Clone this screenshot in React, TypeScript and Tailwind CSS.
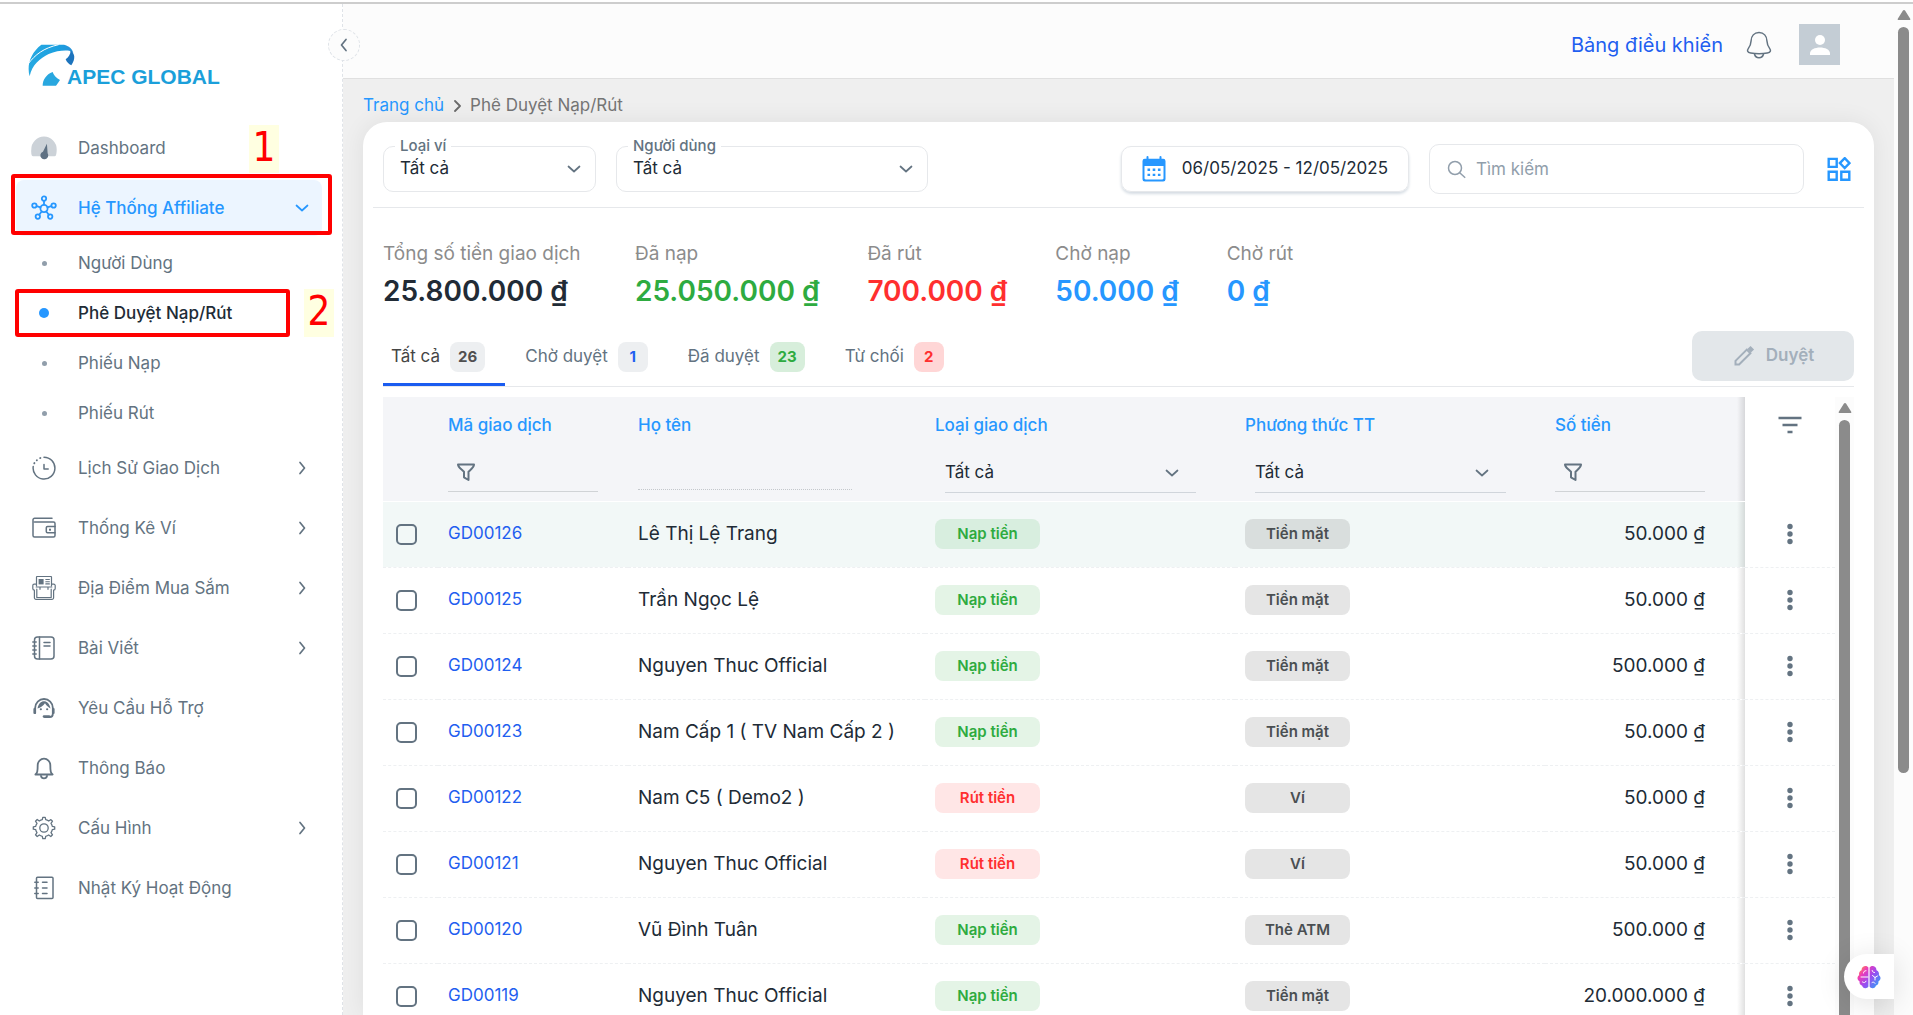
import type { ReactNode } from "react";

type IconProps = { className?: string };

function Svg({ className = "size-6", children, box = "0 0 24 24" }: IconProps & { children: ReactNode; box?: string }) {
  return (
    <svg
      viewBox={box}
      className={className}
      fill="none"
      stroke="currentColor"
      strokeWidth="1.5"
      strokeLinecap="round"
      strokeLinejoin="round"
      aria-hidden="true"
    >
      {children}
    </svg>
  );
}

const Gauge = () => (
  <Svg className="size-[26px]" box="0 0 25 25">
    <path d="M2 20.500a1.400 1.400 0 0 1-1.200-.8A12.500 12.500 0 0 1 .3 14 12.200 12.200 0 0 1 12.500 1.500 12.200 12.200 0 0 1 24.700 14c0 2.400-.2 4.300-.8 5.700a1.400 1.400 0 0 1-1.200.8z" fill="#ccd2d8" stroke="none" />
    <path d="M15.300 8.500 16 17.500a3.800 3.800 0 1 1-6.900 1.200c.3-1.200 1.200-2.300 2.400-2.700z" fill="#5f7183" stroke="none" />
  </Svg>
);

const Network = () => (
  <Svg className="size-[26px]" box="0 0 26 26">
    <circle cx="13" cy="13.500" r="3.600" strokeWidth="1.800" />
    <circle cx="13" cy="3.600" r="2.200" strokeWidth="1.800" />
    <circle cx="3.400" cy="10.500" r="2.200" strokeWidth="1.800" />
    <circle cx="22.600" cy="10.500" r="2.200" strokeWidth="1.800" />
    <circle cx="6.800" cy="21.600" r="2.200" strokeWidth="1.800" />
    <circle cx="19.200" cy="21.600" r="2.200" strokeWidth="1.800" />
    <path d="M13 6v3.600M5.700 11.200l3.800 1.200M20.300 11.200l-3.800 1.200M8.200 19.700l2.500-3.200M17.800 19.700l-2.500-3.200" strokeWidth="1.800" />
  </Svg>
);

const History = () => (
  <Svg>
    <path d="M12 1.200a10.900 10.900 0 1 1-10.800 9.400" />
    <path d="M2.300 7.300l.1-.2M4.800 4.300l.1-.1M8.200 2.100l.2-.1" strokeWidth="1.900" />
    <path d="M12 8.500V13h4.200" />
  </Svg>
);

const Wallet = () => (
  <Svg>
    <path d="M20 2.200H2.600A1.600 1.600 0 0 0 1 3.800v15.700A1.500 1.500 0 0 0 2.500 21H21.500a1.500 1.500 0 0 0 1.500-1.500V7.600a1.500 1.500 0 0 0-1.500-1.500H2.500" />
    <path d="M23 10.500h-7.500a1.200 1.200 0 0 0-1.200 1.200v3.900a1.200 1.200 0 0 0 1.200 1.200H23" />
    <rect x="17" y="12.700" width="2" height="2" fill="currentColor" stroke="none" />
  </Svg>
);

const Store = () => (
  <Svg>
    <path d="M4.500 10V1.200a.7.7 0 0 1 .7-.7h13.600a.7.7 0 0 1 .7.700V10" strokeWidth="1.200" />
    <rect x="6.600" y="3" width="5" height="5.400" fill="currentColor" stroke="none" />
    <path d="M13.800 3.500h3.600M13.800 5.700h3.600M13.800 7.900h3.600" strokeWidth="1.100" />
    <path d="M4 8.200H2.200A1.400 1.400 0 0 0 .8 9.600v3a1.600 1.600 0 0 0 1.600 1.600v7.500A1.600 1.600 0 0 0 4 23.300h16a1.600 1.600 0 0 0 1.600-1.600v-7.500a1.600 1.600 0 0 0 1.600-1.600v-3a1.400 1.400 0 0 0-1.400-1.400H20M4.200 11h15.600M4.800 21.500v-8.300M19.200 21.500v-8.300M8 11v2.300M16 11v2.300M5 21.500h14" strokeWidth="1.200" />
  </Svg>
);

const Notebook = () => (
  <Svg>
    <rect x="2.500" y="1" width="19.500" height="22" rx="3" />
    <path d="M7.500 1v22M12 6.500h6M12 10h6M.8 6h3.400M.8 10h3.400M.8 14h3.400M.8 18h3.400" />
  </Svg>
);

const Support = () => (
  <Svg>
    <path d="M3.200 17v-5.200a8.800 8.800 0 0 1 17.600 0V18c0 1.800-1.200 3-3 3h-5" strokeWidth="1.800" />
    <path d="M2.500 13v4M21.500 13v4" strokeWidth="2.200" />
    <path d="M5.500 12.500C6.500 7.500 9 5.200 12 5.200s5.500 2.300 6.500 7.300c-2-1.200-4.200-3-5.500-5.300-1.600 2.600-4.500 4.500-7.500 5.300z" fill="currentColor" stroke="none" />
    <path d="M8.800 13.300h.1M15.100 13.300h.1" strokeWidth="2.100" />
    <path d="M12 20.500h5" strokeWidth="2.600" />
  </Svg>
);

const BellSmall = () => (
  <Svg>
    <path d="M3.400 18.500c1.800-1.500 2.300-2.700 2.300-9.500a6.300 6.300 0 0 1 12.600 0c0 6.800.5 8 2.300 9.500z" strokeWidth="1.800" />
    <path d="M9 20c.3 1.500 1.500 2.300 3 2.300s2.700-.8 3-2.300" strokeWidth="1.800" />
  </Svg>
);

const Gear = () => (
  <Svg>
    <circle cx="12" cy="12" r="4.200" strokeWidth="1.300" />
    <path
      strokeWidth="1.300"
      d="M10.300 3.700 10.800 1.300h2.400l.5 2.400a8.500 8.500 0 0 1 3 1.300l2.200-1.400 1.600 1.600L19 7.300a8.500 8.500 0 0 1 1.300 3l2.400.5v2.400l-2.400.5a8.500 8.500 0 0 1-1.300 3l1.500 2.100-1.700 1.700-2.100-1.500a8.500 8.500 0 0 1-3 1.300l-.5 2.400h-2.400l-.5-2.400a8.500 8.500 0 0 1-3-1.300l-2.100 1.500-1.700-1.700L5 16.700a8.500 8.500 0 0 1-1.300-3l-2.400-.5v-2.400l2.400-.5a8.500 8.500 0 0 1 1.300-3L3.500 5.200l1.700-1.700L7.300 5a8.500 8.500 0 0 1 3-1.300z"
    />
  </Svg>
);

const Log = () => (
  <Svg>
    <rect x="4.500" y="1.200" width="16.500" height="21.400" rx="1" />
    <path d="M2.800 6.200h3.400M2.800 12h3.400M2.800 17.600h3.400M10.500 6.200H15M10.500 12H15M10.500 17.600H15" />
  </Svg>
);

const ChevronDown = ({ className = "size-4" }: IconProps) => (
  <Svg className={className} box="0 0 16 16">
    <path d="M2.500 5.500 8 10.500l5.500-5" strokeWidth="1.700" />
  </Svg>
);

const ChevronRight = () => (
  <Svg className="size-4" box="0 0 16 16">
    <path d="M6 2.500 10.500 8 6 13.500" strokeWidth="1.700" />
  </Svg>
);

const Funnel = () => (
  <Svg className="size-5" box="0 0 20 20">
    <path d="M2 2.500h16c0 2.500-1.500 3.500-5.500 7.200v8.300l-4.500-2.700V9.700C4 6 2 5 2 2.500z" strokeWidth="2" />
  </Svg>
);

const BellLarge = () => (
  <Svg className="size-7" box="0 0 28 28">
    <path d="M14 1.500c5 0 7.700 3.800 7.900 8.300.2 3.500.8 5.200 2.700 7.600 1.600 2 1.200 4.200-2.300 4.700-5.500.8-11 .8-16.600 0-3.500-.5-3.900-2.700-2.300-4.700 1.900-2.400 2.500-4.100 2.700-7.600C6.300 5.300 9 1.500 14 1.500z" />
    <path d="M9.500 23c.5 2.300 2.200 3.700 4.500 3.700s4-1.400 4.500-3.700" />
  </Svg>
);

const Calendar = () => (
  <Svg className="h-[26px] w-6" box="0 0 24 26">
    <path fill="#2697ff" stroke="none" d="M5.500 0a1 1 0 0 1 1 1v1.800h11V1a1 1 0 0 1 2 0v1.800h1.700A2.300 2.300 0 0 1 23.500 5v18.200a2.300 2.300 0 0 1-2.300 2.300H2.800A2.300 2.300 0 0 1 .5 23.200V5a2.300 2.300 0 0 1 2.300-2.200h1.700V1a1 1 0 0 1 1-1zM2.500 10v12.300c0 .7.500 1.200 1.200 1.200h16.600c.7 0 1.200-.5 1.200-1.200V10z" />
    <path fill="#2697ff" stroke="none" d="M5.500 12.500h2.600v2.400H5.500zM10.700 12.500h2.600v2.400h-2.600zM15.900 12.500h2.600v2.400h-2.600zM5.500 17.700h2.600v2.400H5.500zM10.700 17.700h2.600v2.400h-2.600zM15.900 17.700h2.600v2.400h-2.600z" />
  </Svg>
);

const Widgets = () => (
  <Svg className="size-6">
    <path strokeWidth="2.400" strokeLinejoin="miter" strokeLinecap="butt" d="M1.700 1.900h8v8h-8zM1.700 14.700h8v8h-8zM14.300 14.700h8v8h-8zM17.700 1.200l4.800 4.900-4.800 4.900-4.800-4.900z" />
  </Svg>
);

const Brain = () => (
  <Svg className="h-6 w-6">
    <defs>
      <linearGradient id="brain" x1="0" y1="0.100" x2="1" y2="0.900">
        <stop offset="0" stopColor="#ffa030" />
        <stop offset="0.250" stopColor="#ef3bb8" />
        <stop offset="0.550" stopColor="#9a4cf0" />
        <stop offset="1" stopColor="#28a8f8" />
      </linearGradient>
    </defs>
    <path
      fill="url(#brain)"
      stroke="none"
      d="M11.400 2.500v19c-.8 1.500-2.500 2-4 1.500-1.400-.4-2-1.400-2.200-2.300-1.900-.5-3-2.200-2.600-4.200C.8 15.500.2 13.800.6 12.300c.2-1 .9-1.700 1.600-2.100-.7-2.200.3-4.300 2.300-5C4.600 2.800 6 1.200 8 1c1.600-.1 2.900.5 3.400 1.500zM12.600 2.500v19c.8 1.500 2.500 2 4 1.500 1.400-.4 2-1.400 2.200-2.300 1.900-.5 3-2.200 2.600-4.200 1.800-1 2.400-2.700 2-4.200-.2-1-.9-1.700-1.600-2.100.7-2.200-.3-4.300-2.300-5C19.400 2.800 18 1.200 16 1c-1.600-.1-2.900.5-3.400 1.500z"
    />
    <path stroke="#ffffff" strokeWidth="1" d="M4 12h7M6.500 8c0-1.500 1-2.300 2.500-2.300M5.500 17c1.500 1 3 .8 3.500-.8M15.200 5.500c.3 1.500 1 2 2.300 2M15.500 10.500l2.500 2 2.500-1.500M18 12.500v2.500M15 17.500c1.200-.8 2.400-.3 3 .8" />
  </Svg>
);

function Logo() {
  return (
    <a href="#" aria-label="APEC GLOBAL" className="flex items-end">
      <svg viewBox="0 0 144 126" className="h-[42px] w-12" aria-hidden="true">
        <defs>
          <linearGradient id="band" x1="0" y1="0" x2="1" y2="0">
            <stop offset="0" stopColor="#27a9e1" />
            <stop offset="0.700" stopColor="#1b9fe0" />
            <stop offset="1" stopColor="#2a90d8" />
          </linearGradient>
        </defs>
        <path fill="url(#band)" d="M5 97C-4 66 6 28 40 2h68c14 4 26 12 28 26l-12-8c-16-2-40 0-62 10C36 44 12 62 5 97z" />
        <path fill="none" stroke="#ffffff" strokeWidth="3" d="M0 60C22 32 46 12 92 2" />
        <path fill="#1d74bd" d="M128 20c12 8 16 22 2 44-8-4-14-10-17-18 8-6 14-14 15-26z" />
        <path fill="#29a7df" d="M44 125c0-16 10-34 30-41 2 8 10 18 22 24-4 6-8 12-12 17z" />
      </svg>
      <span className="-ml-[9px] font-['Liberation_Sans',sans-serif] text-[21px] leading-[18px] font-bold text-[#1b9fda]">APEC GLOBAL</span>
    </a>
  );
}

function Marker({ n, className }: { n: string; className: string }) {
  return (
    <span
      className={`absolute flex h-12 w-[30px] items-center justify-center bg-[#ffffe1] pb-1 font-['DejaVu_Sans_Condensed','DejaVu_Sans',sans-serif] text-[40px] leading-none text-[#ff0000] ${className}`}
    >
      {n}
    </span>
  );
}

type NavProps = { icon: ReactNode; label: string; arrow?: boolean; children?: ReactNode };

function NavItem({ icon, label, arrow, children }: NavProps) {
  return (
    <li className="relative">
      <a href="#" className="flex h-14 items-center pr-3 pl-[15px] text-[#637381]">
        <span className="flex w-[26px] justify-center">{icon}</span>
        <span className="ml-[21px] flex-1">{label}</span>
        {arrow && <ChevronRight />}
      </a>
      {children}
    </li>
  );
}

function SubItem({ label, active, children }: { label: string; active?: boolean; children?: ReactNode }) {
  return (
    <li className="relative">
      <a href="#" className={`flex h-[46px] items-center pl-[15px] ${active ? "font-medium text-[#212b36]" : "text-[#637381]"}`}>
        <span className="flex w-[26px] justify-center">
          <span className={active ? "size-[10px] rounded-full bg-[#2697ff]" : "size-[5px] rounded-full bg-[#919eab]"} />
        </span>
        <span className="ml-[21px]">{label}</span>
      </a>
      {children}
    </li>
  );
}

function Sidebar() {
  return (
    <aside className="relative z-10 w-[343px] shrink-0 border-r border-dashed border-[#dfe3e8] bg-white pt-10">
      <button
        type="button"
        aria-label="Thu gọn"
        className="absolute top-[25px] -right-[18px] flex size-8 items-center justify-center rounded-full border border-dashed border-[#dfe3e8] bg-[#fcfcfc] text-[#637381]"
      >
        <Svg className="size-4" box="0 0 16 16">
          <path d="M10 2.500 5.500 8l4.500 5.500" strokeWidth="1.700" />
        </Svg>
      </button>
      <div className="pl-7">
        <Logo />
      </div>
      <nav className="mt-[34px] pr-5 pl-4 text-[17px] leading-6">
        <ul className="flex flex-col gap-1">
          <NavItem icon={<Gauge />} label="Dashboard">
            <Marker n="1" className="top-[5px] right-[43px]" />
          </NavItem>
          <li className="relative">
            <a href="#" className="flex h-14 items-center rounded-lg bg-[#ecf5ff] pr-3 pl-[15px] font-medium text-[#2697ff]">
              <Network />
              <span className="ml-[21px] flex-1">Hệ Thống Affiliate</span>
              <ChevronDown />
            </a>
            <span className="absolute -top-[6px] -right-[10px] bottom-px -left-[5px] rounded-[3px] border-4 border-[#ff0000]" />
          </li>
          <SubItem label="Người Dùng" />
          <SubItem label="Phê Duyệt Nạp/Rút" active>
            <span className="absolute -inset-y-px right-8 -left-px rounded-[3px] border-4 border-[#ff0000]" />
            <Marker n="2" className="-top-px -right-3" />
          </SubItem>
          <SubItem label="Phiếu Nạp" />
          <SubItem label="Phiếu Rút" />
          <NavItem icon={<History />} label="Lịch Sử Giao Dịch" arrow />
          <NavItem icon={<Wallet />} label="Thống Kê Ví" arrow />
          <NavItem icon={<Store />} label="Địa Điểm Mua Sắm" arrow />
          <NavItem icon={<Notebook />} label="Bài Viết" arrow />
          <NavItem icon={<Support />} label="Yêu Cầu Hỗ Trợ" />
          <NavItem icon={<BellSmall />} label="Thông Báo" />
          <NavItem icon={<Gear />} label="Cấu Hình" arrow />
          <NavItem icon={<Log />} label="Nhật Ký Hoạt Động" />
        </ul>
      </nav>
    </aside>
  );
}

function Header() {
  return (
    <header className="flex h-[75px] shrink-0 items-center justify-end border-b border-[#e0e0e0] bg-[#fcfcfc] pt-[7px] pr-[54px]">
      <a href="#" className="text-[20px] text-[#1f5ff0]">Bảng điều khiển</a>
      <button type="button" aria-label="Thông báo" className="ml-[22px] text-[#637381]">
        <BellLarge />
      </button>
      <button type="button" aria-label="Tài khoản" className="ml-[26px] flex size-[41px] items-center justify-center bg-[#c4cdd5]">
        <svg viewBox="0 0 24 24" className="size-6" fill="#ffffff" aria-hidden="true">
          <circle cx="12" cy="7" r="5" />
          <path d="M2 22v-1.500c0-4 5-6 10-6s10 2 10 6V22z" />
        </svg>
      </button>
    </header>
  );
}

function OutlinedSelect({ id, label, className }: { id: string; label: string; className: string }) {
  return (
    <div className={`relative text-[#637381] ${className}`}>
      <label htmlFor={id} className="absolute -top-3 left-3 bg-white px-[5px] text-[15px] leading-6 font-medium">
        {label}
      </label>
      <select id={id} className="h-[46px] w-full appearance-none rounded-[10px] border border-[#e6e8eb] bg-transparent px-4 text-[17px] text-[#212b36]">
        <option>Tất cả</option>
      </select>
      <ChevronDown className="pointer-events-none absolute top-[15px] right-[14px] size-4" />
    </div>
  );
}

function Filters() {
  return (
    <div className="mx-[10px] flex items-center border-b border-[#e6e8eb] px-[10px] pt-[22px] pb-[13px]">
      <OutlinedSelect id="wallet" label="Loại ví" className="w-[213px]" />
      <OutlinedSelect id="user" label="Người dùng" className="ml-5 w-[312px]" />
      <button
        type="button"
        className="ml-auto flex h-[46px] w-[288px] items-center rounded-[10px] border border-[#e6e8eb] px-5 text-base text-[#212b36] shadow-[0_2px_3px_#d5dce3]"
      >
        <Calendar />
        <span className="flex-1 text-right text-[17px] whitespace-nowrap">06/05/2025 - 12/05/2025</span>
      </button>
      <div className="relative ml-5 w-[375px]">
        <svg viewBox="0 0 20 20" className="absolute top-4 left-[18px] size-5 text-[#919eab]" fill="none" stroke="currentColor" strokeWidth="1.500" aria-hidden="true">
          <circle cx="8" cy="8" r="6.500" />
          <path d="m12.700 12.700 5.500 5" />
        </svg>
        <input
          type="search"
          aria-label="Tìm kiếm"
          placeholder="Tìm kiếm"
          className="h-[50px] w-full rounded-[10px] border border-[#e6e8eb] pr-4 pl-[46px] text-[17px] placeholder:text-[#919eab]"
        />
      </div>
      <button type="button" aria-label="Bố cục" className="mr-[3px] ml-[23px] text-[#2697ff]">
        <Widgets />
      </button>
    </div>
  );
}

const stats = [
  { label: "Tổng số tiền giao dịch", value: "25.800.000 ₫", color: "text-[#212b36]" },
  { label: "Đã nạp", value: "25.050.000 ₫", color: "text-[#2eab40]" },
  { label: "Đã rút", value: "700.000 ₫", color: "text-[#ff2f2f]" },
  { label: "Chờ nạp", value: "50.000 ₫", color: "text-[#2697ff]" },
  { label: "Chờ rút", value: "0 ₫", color: "text-[#2697ff]" },
];

const tabs = [
  { label: "Tất cả", count: "26", badge: "bg-[#edeff1] text-[#505050]" },
  { label: "Chờ duyệt", count: "1", badge: "bg-[#edeff1] text-[#1f5ff0]" },
  { label: "Đã duyệt", count: "23", badge: "bg-[#d7eedb] text-[#2eab40]" },
  { label: "Từ chối", count: "2", badge: "bg-[#ffd6d6] text-[#ff2f2f]" },
];

function Tabs() {
  return (
    <div className="mx-5 mt-[22px] flex items-start border-b border-[#e6e8eb]">
      <div role="tablist" className="flex gap-5 text-[17px]">
        {tabs.map((t, i) => (
          <button
            key={t.label}
            type="button"
            role="tab"
            aria-selected={i === 0}
            className={`flex h-[55px] items-center gap-[10px] border-b-[3px] pr-5 ${
              i === 0 ? "border-[#1a5cf0] pl-2 text-[#454545]" : "border-transparent text-[#637381]"
            }`}
          >
            {t.label}
            <span className={`flex h-[30px] min-w-[30px] items-center justify-center rounded-lg px-2 text-[15px] font-bold ${t.badge}`}>{t.count}</span>
          </button>
        ))}
      </div>
      <button
        type="button"
        disabled
        className="mb-[5px] ml-auto flex h-[50px] w-[162px] items-center justify-center gap-[10px] rounded-[10px] bg-[#e3e7ea] text-[17px] font-semibold text-[#a3afbb]"
      >
        <svg viewBox="0 0 24 24" className="size-6" fill="none" stroke="currentColor" strokeWidth="2" aria-hidden="true">
          <path d="M3.500 20.500v-3.600L14.800 5.600l3.600 3.600L7.100 20.500z" />
          <path d="m17 3.500 3.500 3.500" strokeWidth="4.500" />
        </svg>
        Duyệt
      </button>
    </div>
  );
}

const rows = [
  ["GD00126", "Lê Thị Lệ Trang", "Nạp tiền", "Tiền mặt", "50.000"],
  ["GD00125", "Trần Ngọc Lệ", "Nạp tiền", "Tiền mặt", "50.000"],
  ["GD00124", "Nguyen Thuc Official", "Nạp tiền", "Tiền mặt", "500.000"],
  ["GD00123", "Nam Cấp 1 ( TV Nam Cấp 2 )", "Nạp tiền", "Tiền mặt", "50.000"],
  ["GD00122", "Nam C5 ( Demo2 )", "Rút tiền", "Ví", "50.000"],
  ["GD00121", "Nguyen Thuc Official", "Rút tiền", "Ví", "50.000"],
  ["GD00120", "Vũ Đình Tuân", "Nạp tiền", "Thẻ ATM", "500.000"],
  ["GD00119", "Nguyen Thuc Official", "Nạp tiền", "Tiền mặt", "20.000.000"],
];

const chip = "inline-flex h-[30px] w-[105px] items-center justify-center rounded-lg text-[15px] font-semibold";
const sticky = "relative bg-white before:absolute before:inset-y-0 before:-left-2 before:w-2 before:bg-linear-to-r before:from-transparent before:to-black/12";

function HeadCell({ label, children }: { label: string; children: ReactNode }) {
  return (
    <th scope="col" className="px-[10px] pt-4 align-top font-medium text-[#2697ff]">
      <div className="h-6">{label}</div>
      {children}
    </th>
  );
}

function HeadSelect({ label }: { label: string }) {
  return (
    <div className="relative mt-4 mr-[29px] ml-[10px] text-[#637381]">
      <select aria-label={label} className="h-10 w-full appearance-none border-b border-[#d0d5db] bg-transparent text-[17px] font-normal text-[#212b36]">
        <option>Tất cả</option>
      </select>
      <ChevronDown className="pointer-events-none absolute top-3 right-4 size-4" />
    </div>
  );
}

function HeadFunnel({ label }: { label: string }) {
  return (
    <div className="mt-[15px] flex h-10 w-[150px] items-center border-b border-[#d0d3d6] pl-2 text-[#637381]">
      <button type="button" aria-label={label}>
        <Funnel />
      </button>
    </div>
  );
}

function TransactionTable() {
  return (
    <table className="w-full table-fixed border-collapse text-left">
      <colgroup>
        <col className="w-[55px]" />
        <col className="w-[190px]" />
        <col />
        <col className="w-[310px]" />
        <col className="w-[310px]" />
        <col className="w-[200px]" />
        <col className="w-[90px]" />
      </colgroup>
      <thead className="bg-[#f4f5f8] text-[17px]">
        <tr className="h-[104px] border-b border-white">
          <td />
          <HeadCell label="Mã giao dịch">
            <HeadFunnel label="Lọc mã giao dịch" />
          </HeadCell>
          <HeadCell label="Họ tên">
            <input aria-label="Lọc họ tên" className="mt-[13px] block h-10 w-[214px] border-b border-dotted border-[#c4c8cc] outline-none" />
          </HeadCell>
          <HeadCell label="Loại giao dịch">
            <HeadSelect label="Lọc loại giao dịch" />
          </HeadCell>
          <HeadCell label="Phương thức TT">
            <HeadSelect label="Lọc phương thức" />
          </HeadCell>
          <HeadCell label="Số tiền">
            <HeadFunnel label="Lọc số tiền" />
          </HeadCell>
          <td className={`${sticky} pt-4 align-top`}>
            <button type="button" aria-label="Bộ lọc" className="mx-auto block text-[#637381]">
              <Svg className="size-6">
                <path d="M.5 5h23M4.500 12h15M9.500 19h5" strokeWidth="2.400" strokeLinecap="butt" />
              </Svg>
            </button>
          </td>
        </tr>
      </thead>
      <tbody className="text-[19px] text-[#212b36]">
        {rows.map(([code, name, type, method, amount], i) => (
          <tr key={code} className={`h-[66px] border-b border-dashed border-[#eef0f2] ${i === 0 ? "bg-[#f2f8f7]" : ""}`}>
            <td className="pl-[13px]">
              <input type="checkbox" aria-label={code} className="block size-[21px] appearance-none rounded-[5px] border-2 border-[#637381]" />
            </td>
            <td className="px-[10px] text-[17px]">
              <a href="#" className="text-[#1f5ff0]">{code}</a>
            </td>
            <td className="px-[10px] whitespace-nowrap">{name}</td>
            <td className="px-[10px]">
              <span className={`${chip} align-middle ${type === "Nạp tiền" ? "bg-[#2eab40]/13 text-[#2eab40]" : "bg-[#ff2f2f]/12 text-[#ff2f2f]"}`}>{type}</span>
            </td>
            <td className="px-[10px]">
              <span className={`${chip} bg-black/10 align-middle text-[#4a4f52]`}>{method}</span>
            </td>
            <td className="pr-10 text-right whitespace-nowrap">{amount} ₫</td>
            <td className={sticky}>
              <button type="button" aria-label="Thao tác" className="mx-auto block text-[#637381]">
                <svg viewBox="0 0 24 24" className="size-6" fill="currentColor" aria-hidden="true">
                  <circle cx="12" cy="4.500" r="2.700" />
                  <circle cx="12" cy="12" r="2.700" />
                  <circle cx="12" cy="19.500" r="2.700" />
                </svg>
              </button>
            </td>
          </tr>
        ))}
      </tbody>
    </table>
  );
}

function ScrollTrack({ thumb }: { thumb: string }) {
  return (
    <div className="flex w-[19px] shrink-0 flex-col items-center overflow-hidden bg-[#fcfcfc] pt-[6px]" aria-hidden="true">
      <svg viewBox="0 0 14 10" className="h-[10px] w-[14px] shrink-0" fill="#8b8b8b">
        <path d="M7 0c.5 0 .9.200 1.200.7l5 8c.4.700 0 1.300-.8 1.300H1.600C.8 10 .4 9.400.8 8.700l5-8C6.100.2 6.500 0 7 0z" />
      </svg>
      <div className={`mt-[7px] w-[11px] shrink-0 bg-[#8b8b8b] ${thumb}`} />
    </div>
  );
}

export default function App() {
  return (
    <div className="flex h-screen flex-col overflow-hidden bg-white pt-0.5 font-['Inter','Noto_Sans',sans-serif]">
      <div className="h-0.5 shrink-0 bg-[#cdcdcd]" />
      <div className="flex min-h-0 flex-1">
        <Sidebar />
        <div className="relative flex min-w-0 flex-1 flex-col bg-[#efefef]">
          <Header />
          <main className="flex min-h-0 flex-1 flex-col px-5 pt-[15px]">
            <nav aria-label="Breadcrumb" className="flex h-6 items-center gap-[7px] text-[17px]">
              <a href="#" className="text-[#2697ff]">Trang chủ</a>
              <Svg className="size-3 text-[#6b6b6b]" box="0 0 12 12">
                <path d="M4 1 9 6 4 11" strokeWidth="1.800" />
              </Svg>
              <span className="text-[#757575]">Phê Duyệt Nạp/Rút</span>
            </nav>
            <section className="mt-1 flex min-h-0 flex-1 flex-col rounded-t-3xl bg-white shadow-[0_0_24px_rgba(0,0,0,0.07)]">
              <Filters />
              <dl className="mx-5 mt-[34px] flex gap-12">
                {stats.map((s) => (
                  <div key={s.label} className="first:min-w-[204px]">
                    <dt className="text-[19px] leading-6 text-[#8c8c8c]">{s.label}</dt>
                    <dd className={`mt-[7px] text-[28px] leading-9 font-semibold ${s.color}`}>{s.value}</dd>
                  </div>
                ))}
              </dl>
              <Tabs />
              <div className="mx-5 mt-[10px] flex min-h-0 flex-1 overflow-hidden">
                <div className="min-w-0 flex-1">
                  <TransactionTable />
                </div>
                <ScrollTrack thumb="h-[800px] rounded-full" />
              </div>
            </section>
          </main>
          <button
            type="button"
            aria-label="Trợ lý"
            className="absolute right-0 bottom-4 flex h-[45px] w-[50px] items-center rounded-l-full bg-white pl-[13px] shadow-[0_4px_30px_rgba(0,0,0,0.12)]"
          >
            <Brain />
          </button>
        </div>
        <ScrollTrack thumb="h-[746px] rounded-full" />
      </div>
    </div>
  );
}
